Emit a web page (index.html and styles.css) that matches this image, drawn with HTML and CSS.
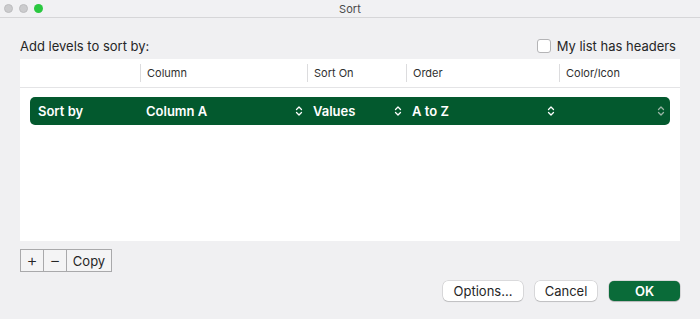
FILE: index.html
```html
<!DOCTYPE html>
<html>
<head>
<meta charset="utf-8">
<link rel="stylesheet" href="styles.css">
</head>
<body>
<div class="window">
  <div class="titlebar">
    <div class="lights">
      <span class="light gray"></span>
      <span class="light gray"></span>
      <span class="light green"></span>
    </div>
    <div class="title">Sort</div>
  </div>
  <div class="content">
    <div class="toprow">
      <div class="label">Add levels to sort by:</div>
      <label class="check"><span class="box"></span><span>My list has headers</span></label>
    </div>
    <div class="table">
      <div class="thead">
        <div class="th c0"></div>
        <div class="th c1">Column</div>
        <div class="th c2">Sort On</div>
        <div class="th c3">Order</div>
        <div class="th c4">Color/Icon</div>
      </div>
      <div class="row">
        <div class="cell c0">Sort by</div>
        <div class="cell c1">Column A<svg class="chev" viewBox="0 0 8 12"><path d="M1.5 4.5 L4 2 L6.5 4.5 M1.5 7.5 L4 10 L6.5 7.5"/></svg></div>
        <div class="cell c2">Values<svg class="chev" viewBox="0 0 8 12"><path d="M1.5 4.5 L4 2 L6.5 4.5 M1.5 7.5 L4 10 L6.5 7.5"/></svg></div>
        <div class="cell c3">A to Z<svg class="chev" viewBox="0 0 8 12"><path d="M1.5 4.5 L4 2 L6.5 4.5 M1.5 7.5 L4 10 L6.5 7.5"/></svg></div>
        <div class="cell c4"><svg class="chev dim" viewBox="0 0 8 12"><path d="M1.5 4.5 L4 2 L6.5 4.5 M1.5 7.5 L4 10 L6.5 7.5"/></svg></div>
      </div>
    </div>
    <div class="seg">
      <button class="sb sq">+</button>
      <button class="sb sq">−</button>
      <button class="sb copy">Copy</button>
    </div>
    <div class="actions">
      <button class="btn opt">Options...</button>
      <button class="btn cancel">Cancel</button>
      <button class="btn ok">OK</button>
    </div>
  </div>
</div>
</body>
</html>
```
FILE: styles.css
```css
* { box-sizing: border-box; }
html, body { margin: 0; padding: 0; }
body {
  width: 700px; height: 319px; overflow: hidden;
  background: #f0f0f2;
  font-family: "Inter", "Liberation Sans", sans-serif;
  color: #262626;
}
.window { width: 700px; height: 319px; background: #f0f0f2; }
.titlebar {
  height: 18px; position: relative;
  border-bottom: 1px solid #d6d6d8;
  background: #f1f1f3;
  display: flex; align-items: center; justify-content: center;
}
.lights { position: absolute; left: 4px; top: 4px; display: flex; gap: 6px; }
.light { width: 9px; height: 9px; border-radius: 50%; display: block; }
.light.gray { background: #cbcbcd; border: 0.5px solid #bdbdbf; }
.light.green { background: #2ac840; }
.title { font-size: 11px; color: #4a4a4a; letter-spacing: 0.1px; }
.content { padding: 0 20px; }
.toprow {
  display: flex; justify-content: space-between; align-items: center;
  height: 41px; padding-top: 14px;
}
.label { font-size: 13px; color: #262626; }
.check { display: flex; align-items: center; gap: 6px; font-size: 13px; margin-right: 4px; }
.box {
  width: 14px; height: 14px; border: 1px solid #b4b4b6; border-radius: 3px;
  background: #fff; display: block;
}
.table { background: #fff; height: 182px; }
.thead {
  display: flex; height: 29px; border-bottom: 1px solid #e4e4e6;
  align-items: center; font-size: 11px; color: #303030;
}
.th { height: 18px; line-height: 18px; padding-left: 6px; }
.th + .th { border-left: 1px solid #dcdcde; }
.c0 { width: 120px; }
.c1 { width: 167px; }
.c2 { width: 99px; }
.c3 { width: 153px; }
.c4 { flex: 1; }
.row {
  margin: 9px 10px 0; height: 28px; border-radius: 5px;
  background: #03592e; color: #fff; display: flex; align-items: center;
  font-size: 13px; font-weight: 600;
}
.row .cell { display: flex; align-items: center; justify-content: space-between; padding-right: 4px; }
.row .c0 { width: 110px; padding-left: 8px; }
.row .c1 { padding-left: 6px; }
.row .c2 { padding-left: 6px; }
.row .c3 { padding-left: 6px; }
.row .c4 { padding-left: 6px; justify-content: flex-end; padding-right: 5px; }
.chev { width: 8px; height: 12px; fill: none; stroke: #fff; stroke-width: 1.3; stroke-linecap: round; stroke-linejoin: round; }
.chev.dim { stroke: #9bb5a6; }
.seg { display: flex; margin-top: 8px; }
.sb {
  height: 23px; border: 1px solid #a9a9ab; background: #f4f4f5;
  font-family: inherit; font-size: 13px; color: #262626; padding: 0;
  margin-left: -1px;
}
.sb:first-child { margin-left: 0; }
.sq { width: 24px; font-size: 17px; font-weight: 300; line-height: 1; }
.copy { width: 46px; }
.actions { display: flex; justify-content: flex-end; gap: 12px; margin-top: 9px; }
.btn {
  height: 20px; border: none; border-radius: 5px; background: #fff;
  box-shadow: 0 0 0 0.5px rgba(0,0,0,0.18), 0 1px 1px rgba(0,0,0,0.12);
  font-family: inherit; font-size: 13px; color: #262626; padding: 0;
}
.opt { width: 80px; }
.cancel { width: 62px; }
.btn.ok {
  width: 71px; background: #0a6b39; color: #fff; font-weight: 600;
  box-shadow: 0 0 0 0.5px rgba(0,0,0,0.2), 0 1px 1px rgba(0,0,0,0.15);
}
```
